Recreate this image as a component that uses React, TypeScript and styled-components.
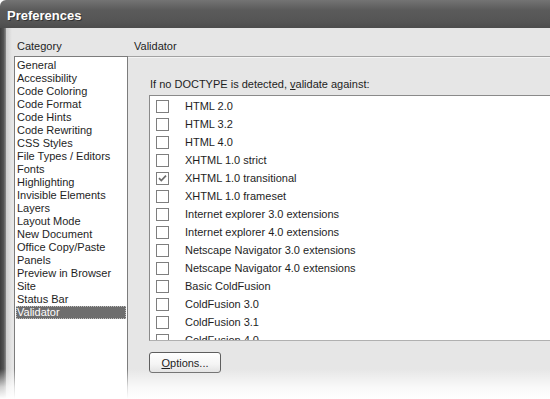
import React from "react";
import styled, { createGlobalStyle } from "styled-components";

const GlobalStyle = createGlobalStyle`
  html, body {
    margin: 0;
    padding: 0;
    background: #ffffff;
  }
  body {
    width: 550px;
    height: 399px;
    overflow: hidden;
    font-family: "Liberation Sans", Arial, sans-serif;
    font-size: 11px;
    color: #1e1e1e;
  }
`;

const categories = [
  "General",
  "Accessibility",
  "Code Coloring",
  "Code Format",
  "Code Hints",
  "Code Rewriting",
  "CSS Styles",
  "File Types / Editors",
  "Fonts",
  "Highlighting",
  "Invisible Elements",
  "Layers",
  "Layout Mode",
  "New Document",
  "Office Copy/Paste",
  "Panels",
  "Preview in Browser",
  "Site",
  "Status Bar",
  "Validator",
];

const doctypes = [
  { label: "HTML 2.0", checked: false },
  { label: "HTML 3.2", checked: false },
  { label: "HTML 4.0", checked: false },
  { label: "XHTML 1.0 strict", checked: false },
  { label: "XHTML 1.0 transitional", checked: true },
  { label: "XHTML 1.0 frameset", checked: false },
  { label: "Internet explorer 3.0 extensions", checked: false },
  { label: "Internet explorer 4.0 extensions", checked: false },
  { label: "Netscape Navigator 3.0 extensions", checked: false },
  { label: "Netscape Navigator 4.0 extensions", checked: false },
  { label: "Basic ColdFusion", checked: false },
  { label: "ColdFusion 3.0", checked: false },
  { label: "ColdFusion 3.1", checked: false },
  { label: "ColdFusion 4.0", checked: false },
];

function Preferences() {
  return (
    <Window>
      <TitleBar>Preferences</TitleBar>
      <Body>
        <Frame />
        <Content>
          <CategoryColumn>
            <Heading>Category</Heading>
            <CategoryList>
              {categories.map((c) => (
                <CategoryItem key={c} $selected={c === "Validator"}>
                  {c}
                </CategoryItem>
              ))}
            </CategoryList>
          </CategoryColumn>
          <SettingsColumn>
            <PanelHeading>Validator</PanelHeading>
            <Panel>
              <Prompt>
                If no DOCTYPE is detected, <u>v</u>alidate against:
              </Prompt>
              <CheckList>
                {doctypes.map((d) => (
                  <CheckRow key={d.label}>
                    <CheckBox>
                      {d.checked && (
                        <svg width="11" height="11" viewBox="0 0 11 11">
                          <path
                            d="M2 5.2 L4.3 7.6 L9 2.6"
                            fill="none"
                            stroke="#6c6c6c"
                            strokeWidth="1.7"
                          />
                        </svg>
                      )}
                    </CheckBox>
                    <span>{d.label}</span>
                  </CheckRow>
                ))}
              </CheckList>
              <OptionsButton>
                <u>O</u>ptions...
              </OptionsButton>
            </Panel>
          </SettingsColumn>
        </Content>
      </Body>
      <BottomFade />
    </Window>
  );
}

const Window = styled.div`
  position: relative;
  width: 550px;
  height: 399px;
  display: flex;
  flex-direction: column;
  overflow: hidden;
`;

const TitleBar = styled.div`
  height: 28px;
  flex-shrink: 0;
  display: flex;
  align-items: center;
  padding: 2px 0 0 7px;
  box-sizing: border-box;
  border-top-left-radius: 6px;
  background: linear-gradient(#747474, #5b5b5b 35%, #545454 80%, #4c4c4c);
  color: #ffffff;
  font-weight: bold;
  font-size: 13px;
  text-shadow: 1px 1px 0 #333333;
`;

const Body = styled.div`
  flex: 1;
  display: flex;
  background: #e6e6e6;
`;

const Frame = styled.div`
  width: 6px;
  flex-shrink: 0;
  background: linear-gradient(to right, #3c3c3c, #545454 60%, #8c8c8c);
`;

const Content = styled.div`
  flex: 1;
  display: flex;
  padding: 10px 0 0 8px;
  background: linear-gradient(to right, #cdcdcd, #e6e6e6 6px);
`;

const CategoryColumn = styled.div`
  width: 114px;
  display: flex;
  flex-direction: column;
`;

const Heading = styled.div`
  height: 16px;
  line-height: 16px;
  padding-left: 3px;
  margin-bottom: 2px;
`;

const CategoryList = styled.div`
  flex: 1;
  background: #ffffff;
  border: 1px solid #7c7c7c;
  border-bottom: none;
  padding: 2px 1px 0;
`;

const CategoryItem = styled.div<{ $selected?: boolean }>`
  height: 13px;
  line-height: 13px;
  padding-left: 1px;
  white-space: nowrap;
  background: ${(p) => (p.$selected ? "#6e6e6e" : "transparent")};
  color: ${(p) => (p.$selected ? "#ffffff" : "#1e1e1e")};
  outline: ${(p) => (p.$selected ? "1px dotted #bdbdbd" : "none")};
  outline-offset: -1px;
`;

const SettingsColumn = styled.div`
  flex: 1;
  display: flex;
  flex-direction: column;
`;

const PanelHeading = styled.div`
  height: 16px;
  line-height: 16px;
  padding-left: 6px;
  margin-bottom: 2px;
`;

const Panel = styled.div`
  flex: 1;
  border-top: 1px solid #a2a2a2;
  box-shadow: inset 0 1px 0 #f4f4f4;
  padding: 20px 0 0 21px;
  display: flex;
  flex-direction: column;
  align-items: flex-start;
`;

const Prompt = styled.div`
  height: 14px;
  line-height: 14px;
  padding-left: 1px;
  margin-bottom: 4px;
  white-space: nowrap;
`;

const CheckList = styled.div`
  width: 420px;
  height: 243px;
  overflow: hidden;
  background: #ffffff;
  border: 1px solid #8a8a8a;
  border-right: none;
  border-bottom-color: #b0b0b0;
  padding-top: 1px;
`;

const CheckRow = styled.div`
  height: 18px;
  display: flex;
  align-items: center;
  padding-left: 6px;
  gap: 16px;
  white-space: nowrap;
`;

const CheckBox = styled.div`
  width: 11px;
  height: 11px;
  border: 1px solid #7e7e7e;
  background: #ffffff;
  display: flex;
  align-items: center;
  justify-content: center;
  flex-shrink: 0;
`;

const OptionsButton = styled.button`
  margin-top: 11px;
  width: 72px;
  height: 21px;
  padding: 0;
  border: 1px solid #5e5e5e;
  border-radius: 3px;
  background: linear-gradient(#ffffff, #f4f4f4 60%, #e2e2e2);
  font-family: "Liberation Sans", Arial, sans-serif;
  font-size: 11px;
  color: #1e1e1e;
`;

const BottomFade = styled.div`
  position: absolute;
  left: 0;
  right: 0;
  bottom: 0;
  height: 30px;
  background: linear-gradient(rgba(255, 255, 255, 0), rgba(255, 255, 255, 0.75) 60%, #ffffff);
  pointer-events: none;
`;

export default function App() {
  return (
    <>
      <GlobalStyle />
      <Preferences />
    </>
  );
}
